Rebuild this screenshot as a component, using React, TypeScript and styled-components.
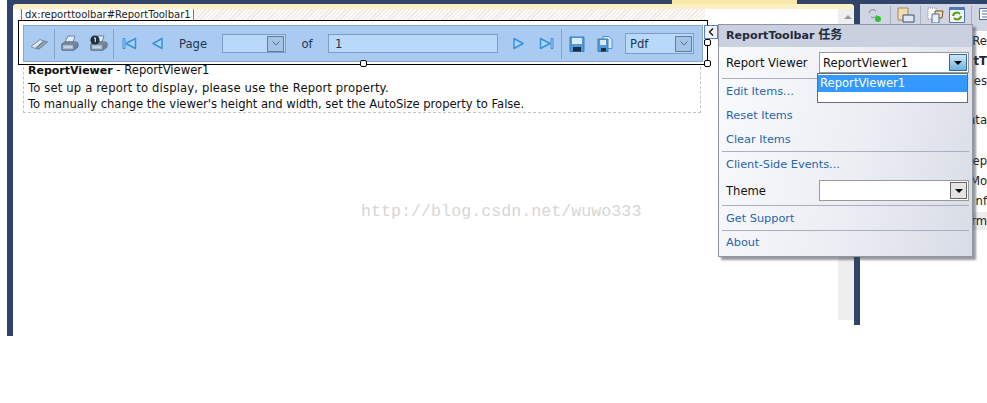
import React from 'react';
import styled, { createGlobalStyle } from 'styled-components';

const Global = createGlobalStyle`
  html, body { margin: 0; padding: 0; background: #fff; }
  body { font-family: "DejaVu Sans", "Noto Sans CJK SC", sans-serif; font-size: 11.6px; color: #111; }
`;

// ------------ page frame ------------
const Page = styled.div`
  position: relative;
  width: 987px;
  height: 403px;
  overflow: hidden;
  background: #fff;
  display: flex;
  align-items: flex-start;
  padding-left: 7px;
  box-sizing: border-box;
`;
const DocWindow = styled.div`
  width: 853px;
  height: 336px;
  background: #2f4468;
  flex: none;
`;
const TitleStrip = styled.div`
  height: 4px;
  display: flex;
  justify-content: flex-end;
`;
const ActiveTab = styled.div`
  width: 125px;
  height: 4px;
  margin-right: 63px;
  background: #fbe7a7;
`;
const DocBody = styled.div`
  height: 316px;
  margin: 0 6px 0 6px;
  background: #fff;
  border-top: 5px solid #fdf0c4;
  border-radius: 3px 3px 0 0;
  display: flex;
`;
const Canvas = styled.div`
  width: 825px;
  flex: none;
  padding-left: 6px;
  box-sizing: border-box;
  position: relative;
`;
const ScrollBar = styled.div`
  width: 16px;
  height: 311px;
  background: #eeeeee;
  display: flex;
  justify-content: center;
  padding: 6px 0 0 4px;
  box-sizing: border-box;
`;
const ScrollArrow = styled.div`
  width: 0;
  height: 0;
  border-left: 4px solid transparent;
  border-right: 4px solid transparent;
  border-bottom: 4px solid #9a9a9a;
`;
const Bottom = styled.div`
  height: 16px;
  background: #fff;
  margin: 0 0 0 6px;
`;

// ------------ designer ------------
const TagStrip = styled.div`
  width: 684px;
  height: 11px;
  background: repeating-linear-gradient(135deg, #efe7e4 0 1px, #fbf8f6 1px 3px);
  display: flex;
  padding-left: 2px;
`;
const TagLabel = styled.div`
  height: 11px;
  padding: 0 2px 0 3px;
  background: #fff;
  border-left: 1px solid #5d7fb0;
  border-right: 1px solid #5d7fb0;
  font-size: 10px;
  line-height: 11px;
  color: #222;
  white-space: nowrap;
`;
const Selection = styled.div`
  width: 680px;
  height: 36px;
  padding: 4px 4px 3px 4px;
  border: 1px solid #000;
  box-sizing: content-box;
  position: relative;
  margin-left: -1px;
  background: #fff;
`;
const Toolbar = styled.div`
  height: 35px;
  background: #a9cbf2;
  border: 1px solid #88a5c9;
  display: flex;
  align-items: center;
  font-size: 11.6px;
  color: #20364f;
`;
const Cell = styled.div<{ $w: number }>`
  width: ${(p) => p.$w}px;
  flex: none;
  display: flex;
  align-items: center;
  justify-content: center;
`;
const Sep = styled.div`
  width: 1px;
  height: 30px;
  background: #84a2c6;
  flex: none;
`;
const Combo = styled.div<{ $w: number; $h?: number; $pad?: number }>`
  width: ${(p) => p.$w}px;
  height: ${(p) => p.$h ?? 19}px;
  box-sizing: border-box;
  border: 1px solid #7f9cc2;
  background: #b9d9fb;
  flex: none;
  display: flex;
  align-items: center;
  justify-content: space-between;
  padding: 0 1px 0 ${(p) => p.$pad ?? 4}px;
  color: #20364f;
  font-size: 11.6px;
`;
const ComboArrow = styled.div`
  width: 17px;
  height: 16px;
  box-sizing: border-box;
  border: 1px solid #5f7f9f;
  background: #a5c3e4;
  display: flex;
  align-items: center;
  justify-content: center;
`;
const Handle = styled.div<{ $l: number; $t: number }>`
  position: absolute;
  left: ${(p) => p.$l}px;
  top: ${(p) => p.$t}px;
  width: 7px;
  height: 7px;
  box-sizing: border-box;
  border: 1px solid #000;
  border-radius: 2px;
  background: #fff;
  z-index: 3;
`;
const ViewerBox = styled.div`
  width: 678px;
  height: 51px;
  margin: -3px 0 0 4px;
  box-sizing: border-box;
  border: 1px dashed #c4c4c4;
  border-top: 0;
  padding: 0 0 0 4px;
  line-height: 16.5px;
  color: #111;
  white-space: nowrap;
`;
const ViewerLine = styled.div<{ $track?: number }>`
  letter-spacing: ${(p) => p.$track ?? 0}px;
`;
const ViewerName = styled.b`
  font-size: 11px;
`;
const Watermark = styled.div`
  position: absolute;
  left: 348px;
  top: 193px;
  font-family: "Liberation Mono", monospace;
  font-size: 16.7px;
  line-height: 20px;
  color: #d6d6d6;
  white-space: nowrap;
`;

// ------------ smart tag ------------
const Chevron = styled.div`
  position: absolute;
  left: 704px;
  top: 25px;
  width: 14px;
  height: 14px;
  box-sizing: border-box;
  border: 1px solid #5b82b5;
  background: #eef1f6;
  display: flex;
  align-items: center;
  justify-content: center;
  z-index: 4;
`;
const Popup = styled.div`
  position: absolute;
  left: 718px;
  top: 24px;
  width: 255px;
  height: 233px;
  box-sizing: border-box;
  border: 1px solid #8e96a6;
  background: linear-gradient(105deg, #fafbfd 0%, #eceef4 55%, #d8dce6 100%);
  box-shadow: 3px 3px 2px rgba(70, 70, 70, 0.55);
  z-index: 5;
  display: flex;
  flex-direction: column;
`;
const PopupHead = styled.div`
  height: 22px;
  background: #c9d0df;
  font-weight: bold;
  font-size: 11.1px;
  line-height: 21px;
  padding-left: 7px;
  color: #1f2a3a;
  flex: none;
`;
const HeadCjk = styled.span`
  font-size: 12px;
`;
const Row = styled.div<{ $h: number }>`
  height: ${(p) => p.$h}px;
  flex: none;
  display: flex;
  align-items: center;
  padding: 0 3px 0 7px;
  position: relative;
`;
const RowLabel = styled.div`
  width: 93px;
  flex: none;
  color: #111;
`;
const TaskLink = styled.div`
  color: #1f66ad;
  font-size: 11.3px;
`;
const Rule = styled.div`
  height: 1px;
  margin: 0 3px;
  background: #a9afbc;
  flex: none;
`;
const Field = styled.div`
  width: 150px;
  height: 21px;
  box-sizing: border-box;
  border: 1px solid #9a9a9a;
  background: #fff;
  display: flex;
  align-items: center;
  justify-content: space-between;
  padding: 0 1px 0 3px;
  color: #111;
`;
const FieldArrow = styled.div<{ $active?: boolean }>`
  width: ${(p) => (p.$active ? 18 : 17)}px;
  height: 17px;
  box-sizing: border-box;
  border: 1px solid ${(p) => (p.$active ? '#2f6f9e' : '#666')};
  background: ${(p) => (p.$active ? 'linear-gradient(#cfe7f7, #6fb2de)' : '#e4e4e4')};
  display: flex;
  align-items: center;
  justify-content: center;
  &::after {
    content: '';
    border-left: 4px solid transparent;
    border-right: 4px solid transparent;
    border-top: 4px solid #000;
  }
`;
const DropList = styled.div`
  position: absolute;
  left: 98px;
  top: 26px;
  width: 151px;
  height: 30px;
  box-sizing: border-box;
  border: 1px solid #666c75;
  background: #fff;
  padding-top: 1px;
  z-index: 6;
`;
const DropItem = styled.div`
  height: 17px;
  line-height: 17px;
  background: #3399ff;
  color: #fff;
  padding-left: 2px;
`;

// ------------ right docked panel ------------
const SidePanel = styled.div`
  width: 127px;
  flex: none;
  height: 320px;
  background: #fff;
`;
const SideTop = styled.div`
  height: 4px;
  background: #2f4468;
`;
const SideBar = styled.div`
  height: 27px;
  background: #cfd5e2;
  display: flex;
  align-items: flex-start;
  padding-top: 2px;
  box-sizing: border-box;
`;
const SideIcon = styled.div<{ $w: number }>`
  width: ${(p) => p.$w}px;
  display: flex;
  justify-content: center;
  border-right: 1px solid #aab1c0;
  height: 18px;
  align-items: center;
  flex: none;
`;
const SideIconPair = styled.div`
  width: 51px;
  height: 18px;
  flex: none;
  display: flex;
  align-items: center;
  gap: 4px;
  padding-left: 6px;
  box-sizing: border-box;
  border-right: 1px solid #aab1c0;
`;
const SideEnd = styled.div`
  margin-left: 7px;
  flex: none;
`;
const SideList = styled.div`
  color: #222;
  text-align: right;
  white-space: nowrap;
`;
const SideLine = styled.div<{ $h: number; $bold?: boolean; $grey?: boolean }>`
  height: ${(p) => p.$h}px;
  line-height: ${(p) => p.$h}px;
  font-weight: ${(p) => (p.$bold ? 'bold' : 'normal')};
  background: ${(p) => (p.$grey ? '#ececec' : 'transparent')};
`;

const Print = ({ badge }: { badge?: boolean }) => (
  <svg width="19" height="17" viewBox="0 0 19 17">
    <path d="M8 1h7l-2 6H5z" fill="#e2eefa" stroke="#71859c" />
    <path d="M2 9l3-2h11l2 1v4l-4 3H2z" fill="#8a9db2" stroke="#566a80" />
    <path d="M2 9h12v6H2z" fill="#a9b8c8" stroke="#566a80" />
    <path d="M4 12h8" stroke="#e6edf4" />
    <path d="M14 9l4-1v4l-4 3z" fill="#6c7f94" />
    {badge && <circle cx="6" cy="5" r="4.6" fill="#1d2f45" />}
    {badge && <path d="M5 3.3L6.3 2.8v4.4" stroke="#fff" fill="none" />}
  </svg>
);
const Tool = () => (
  <svg width="18" height="12" viewBox="0 0 18 12">
    <path d="M1 8.5L10 1.5l3.5 1.5-8.5 7.5z" fill="#dfe7f0" stroke="#76889c" />
    <path d="M6 10.5L14.5 3l3 1-8.5 7z" fill="#93a5b9" stroke="#6b7e92" />
  </svg>
);
const Nav = ({ kind }: { kind: 'first' | 'prev' | 'next' | 'last' }) => {
  const left = kind === 'first' || kind === 'prev';
  const hasBar = kind === 'first' || kind === 'last';
  return (
    <svg width="15" height="13" viewBox="0 0 15 13">
      <g transform={left ? undefined : 'translate(15 0) scale(-1 1)'}>
        {hasBar && <path d="M1 1.5h2v10H1z" fill="#a9d2f6" stroke="#3a90dc" />}
        <path
          d={hasBar ? 'M13.5 1.5L4 6.5l9.5 5z' : 'M12 1.5L3 6.5l9 5z'}
          fill="#a9d2f6"
          stroke="#3a90dc"
          strokeWidth="1.5"
          strokeLinejoin="round"
        />
      </g>
    </svg>
  );
};
const Save = ({ all }: { all?: boolean }) => (
  <svg width="16" height="16" viewBox="0 0 16 16">
    {all && <path d="M6 0.5h6l3 3v9H6z" fill="#dce9f5" stroke="#4a93d2" />}
    <path d={all ? 'M1 3h10v12.5H1z' : 'M1 1h14v14.5H1z'} fill="#4f9ad9" stroke="#3b7fbb" />
    <path d={all ? 'M3 4h6v5H3z' : 'M3 2h10v6H3z'} fill="#dbeafa" />
    <path d={all ? 'M4 12h5v3.5H4z' : 'M4 11h8v4.5H4z'} fill="#1f2d3c" />
  </svg>
);
const Caret = () => (
  <svg width="8" height="5" viewBox="0 0 8 5">
    <path d="M0.5 0.5L4 4l3.5-3.5" fill="none" stroke="#54708e" />
  </svg>
);

export default function App() {
  return (
    <>
      <Global />
      <Page>
        <DocWindow>
          <TitleStrip>
            <ActiveTab />
          </TitleStrip>
          <DocBody>
            <Canvas>
              <TagStrip>
                <TagLabel>dx:reporttoolbar#ReportToolbar1</TagLabel>
              </TagStrip>
              <Selection>
                <Toolbar>
                  <Cell $w={30}><Tool /></Cell>
                  <Sep />
                  <Cell $w={29}><Print /></Cell>
                  <Cell $w={29}><Print badge /></Cell>
                  <Sep />
                  <Cell $w={30}><Nav kind="first" /></Cell>
                  <Cell $w={26}><Nav kind="prev" /></Cell>
                  <Cell $w={46}>Page</Cell>
                  <Cell $w={6} />
                  <Combo $w={64}>
                    <span />
                    <ComboArrow><Caret /></ComboArrow>
                  </Combo>
                  <Cell $w={42}>of</Cell>
                  <Combo $w={170} $pad={6}>1</Combo>
                  <Cell $w={40}><Nav kind="next" /></Cell>
                  <Cell $w={16}><Nav kind="last" /></Cell>
                  <Cell $w={7} />
                  <Sep />
                  <Cell $w={30}><Save /></Cell>
                  <Cell $w={26}><Save all /></Cell>
                  <Cell $w={7} />
                  <Combo $w={69} $h={21}>
                    Pdf
                    <ComboArrow><Caret /></ComboArrow>
                  </Combo>
                </Toolbar>
                <Handle $l={341} $t={39} />
                <Handle $l={685} $t={18} />
                <Handle $l={685} $t={39} />
              </Selection>
              <ViewerBox>
                <ViewerLine>
                  <ViewerName>ReportViewer</ViewerName> - ReportViewer1
                </ViewerLine>
                <ViewerLine $track={0.145}>To set up a report to display, please use the Report property.</ViewerLine>
                <ViewerLine $track={-0.035}>
                  To manually change the viewer's height and width, set the AutoSize property to False.
                </ViewerLine>
              </ViewerBox>
              <Watermark>http://blog.csdn.net/wuwo333</Watermark>
            </Canvas>
            <ScrollBar>
              <ScrollArrow />
            </ScrollBar>
          </DocBody>
          <Bottom />
        </DocWindow>
        <SidePanel>
          <SideTop />
          <SideBar>
            <SideIcon $w={30}>
              <svg width="16" height="16" viewBox="0 0 16 16">
                <path d="M2 6a4 4 0 0 1 7-2M10 8a4 4 0 0 1-6 2" fill="none" stroke="#7d8796" />
                <circle cx="11" cy="12" r="3" fill="#2fc22f" />
              </svg>
            </SideIcon>
            <SideIcon $w={29}>
              <svg width="18" height="16" viewBox="0 0 18 16">
                <path d="M1 1h10v12H1z" fill="#f4dcae" stroke="#a08a60" />
                <path d="M6 8h11v7H6z" fill="#dfe7f3" stroke="#3a4f75" />
              </svg>
            </SideIcon>
            <SideIconPair>
              <svg width="18" height="16" viewBox="0 0 18 16">
                <path d="M1 1h8v11H1z" fill="#fff" stroke="#888" strokeDasharray="1 1" />
                <path d="M8 4h8l-1 7H8z" fill="#f2dca9" stroke="#6b5a3a" />
                <path d="M5 7h7v9H5z" fill="#e6eef9" stroke="#4a6aa0" />
              </svg>
              <svg width="16" height="16" viewBox="0 0 16 16">
                <path d="M0.5 0.5h15v15H0.5z" fill="#f5f8f0" stroke="#4a78b8" />
                <path d="M1 1h14v2H1z" fill="#4a78b8" />
                <path d="M4 9a4 4 0 0 1 7-2M12 9a4 4 0 0 1-7 2" fill="none" stroke="#5c9a1f" strokeWidth="2" />
              </svg>
            </SideIconPair>
            <SideEnd>
              <svg width="16" height="16" viewBox="0 0 16 16">
                <path d="M0.5 2.5h15v11H0.5z" fill="#fff" stroke="#4a6aa0" />
                <path d="M3 5h10M3 8h10M3 11h7" stroke="#4a6aa0" />
              </svg>
            </SideEnd>
          </SideBar>
          <SideList>
            <SideLine $h={2} />
            <SideLine $h={16}>/Re</SideLine>
            <SideLine $h={24} $bold>tT</SideLine>
            <SideLine $h={16}>ies</SideLine>
            <SideLine $h={23} />
            <SideLine $h={16}>ata</SideLine>
            <SideLine $h={23} />
            <SideLine $h={20}>Rep</SideLine>
            <SideLine $h={20}>Mo</SideLine>
            <SideLine $h={20}>nf</SideLine>
            <SideLine $h={1} />
            <SideLine $h={18} $grey>rm</SideLine>
          </SideList>
        </SidePanel>
        <Chevron>
          <svg width="6" height="8" viewBox="0 0 6 8">
            <path d="M5 0.5L1.5 4 5 7.5" fill="none" stroke="#111" strokeWidth="1.3" />
          </svg>
        </Chevron>
        <Popup>
          <PopupHead>ReportToolbar <HeadCjk>任务</HeadCjk></PopupHead>
          <Row $h={31}>
            <RowLabel>Report Viewer</RowLabel>
            <Field>
              ReportViewer1
              <FieldArrow $active />
            </Field>
            <DropList>
              <DropItem>ReportViewer1</DropItem>
            </DropList>
          </Row>
          <Rule />
          <Row $h={24}><TaskLink>Edit Items...</TaskLink></Row>
          <Row $h={24}><TaskLink>Reset Items</TaskLink></Row>
          <Row $h={24}><TaskLink>Clear Items</TaskLink></Row>
          <Rule />
          <Row $h={24}><TaskLink>Client-Side Events...</TaskLink></Row>
          <Row $h={29}>
            <RowLabel>Theme</RowLabel>
            <Field><span /><FieldArrow /></Field>
          </Row>
          <Rule />
          <Row $h={24}><TaskLink>Get Support</TaskLink></Row>
          <Rule />
          <Row $h={23}><TaskLink>About</TaskLink></Row>
        </Popup>
      </Page>
    </>
  );
}
